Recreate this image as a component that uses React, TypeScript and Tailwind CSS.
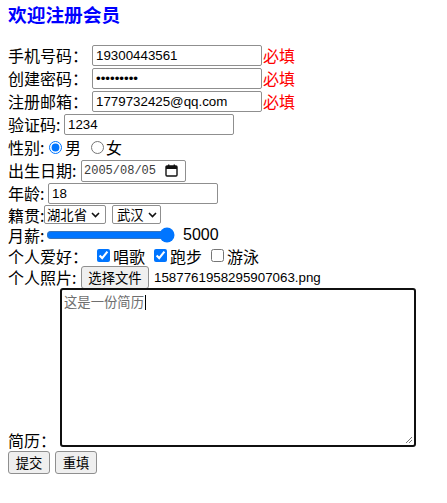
import React from 'react'

const inputCls =
  "h-[21px] shrink-0 border border-[#8f8f8f] rounded-[2px] px-[3px] text-[13.33px] font-['Liberation_Sans','Noto_Sans_CJK_SC',sans-serif] text-black outline-none bg-white"

const btnCls =
  "h-[23px] shrink-0 border border-[#8f8f8f] rounded-[3px] bg-[#efefef] px-[6px] text-[13.33px] text-black leading-none whitespace-nowrap"

const labelCls = 'shrink-0 whitespace-nowrap leading-[23px]'
const shortLabel = 'shrink-0 whitespace-nowrap leading-[20px]'

const Chevron = () => (
  <svg width="9" height="6" viewBox="0 0 9 6" className="ml-[4px] shrink-0">
    <path d="M1 1 L4.5 4.5 L8 1" fill="none" stroke="#111" strokeWidth="1.6" />
  </svg>
)

const Required = () => <span className={`${labelCls} ml-[1px] text-[#ff0000]`}>必填</span>

export default function App() {
  return (
    <div className="min-h-[503px] w-[447px] bg-white px-[8px] font-['Noto_Sans_CJK_SC',sans-serif] text-[16px] text-black">
      <h3 className="h-[27px] text-[18.72px] font-bold leading-[27px] text-[#0000ff]">欢迎注册会员</h3>

      <form className="mt-[17px] flex flex-col" onSubmit={(e) => e.preventDefault()}>
        <div className="flex h-[23px] items-center">
          <span className={`${labelCls} w-[84px]`}>手机号码：</span>
          <input className={`${inputCls} w-[170px]`} defaultValue="19300443561" />
          <Required />
        </div>
        <div className="flex h-[23px] items-center">
          <span className={`${labelCls} w-[84px]`}>创建密码：</span>
          <input type="password" className={`${inputCls} w-[170px]`} defaultValue="123456789" />
          <Required />
        </div>
        <div className="flex h-[23px] items-center">
          <span className={`${labelCls} w-[84px]`}>注册邮箱：</span>
          <input className={`${inputCls} w-[170px]`} defaultValue="1779732425@qq.com" />
          <Required />
        </div>
        <div className="flex h-[23px] items-center">
          <span className={`${labelCls} w-[56px]`}>验证码:</span>
          <input className={`${inputCls} w-[170px]`} defaultValue="1234" />
        </div>
        <div className="flex h-[23px] items-center">
          <span className={`${labelCls} w-[41px]`}>性别:</span>
          <input type="radio" name="sex" defaultChecked className="m-0 h-[13px] w-[13px] shrink-0 accent-[#0075ff]" />
          <span className="ml-[3px] w-[26px] shrink-0 leading-[23px]">男</span>
          <input type="radio" name="sex" className="m-0 h-[13px] w-[13px] shrink-0 accent-[#0075ff]" />
          <span className="ml-[2px] leading-[23px]">女</span>
        </div>
        <div className="flex h-[23px] items-center">
          <span className={`${labelCls} w-[73px]`}>出生日期:</span>
          <div className="flex h-[22px] w-[105px] shrink-0 items-center rounded-[2px] border border-[#8f8f8f] pl-[2px]">
            <span className="font-['Liberation_Mono',monospace] text-[12px] text-[#3b3b3b]">2005/08/05</span>
            <svg width="13" height="13" viewBox="0 0 13 13" className="ml-[9px]">
              <rect x="1" y="2" width="11" height="10" rx="1" fill="none" stroke="#111" strokeWidth="1.4" />
              <rect x="1" y="2" width="11" height="3" fill="#111" />
              <rect x="3" y="0.5" width="1.4" height="2.5" fill="#111" />
              <rect x="8.6" y="0.5" width="1.4" height="2.5" fill="#111" />
            </svg>
          </div>
        </div>
        <div className="flex h-[22px] items-center">
          <span className={`${shortLabel} w-[40px]`}>年龄:</span>
          <input className={`${inputCls} w-[170px]`} defaultValue="18" />
        </div>
        <div className="flex h-[21px] items-center">
          <span className={`${shortLabel} w-[36px]`}>籍贯:</span>
          <div className="flex h-[19px] w-[62px] shrink-0 items-center whitespace-nowrap rounded-[2px] border border-[#8f8f8f] pl-[2px] text-[13.33px] leading-[17px]">
            湖北省
            <Chevron />
          </div>
          <div className="ml-[6px] flex h-[19px] w-[49px] shrink-0 items-center whitespace-nowrap rounded-[2px] border border-[#8f8f8f] pl-[4px] text-[13.33px] leading-[17px]">
            武汉
            <Chevron />
          </div>
        </div>
        <div className="flex h-[20px] items-center">
          <span className={`${shortLabel} w-[38px]`}>月薪:</span>
          <input type="range" defaultValue={100} className="m-0 w-[129px] shrink-0 accent-[#0075ff]" />
          <span className="ml-[8px] font-['Liberation_Sans',sans-serif] leading-[20px]">5000</span>
        </div>
        <div className="flex h-[21px] items-center">
          <span className={`${shortLabel} w-[89px]`}>个人爱好：</span>
          <input type="checkbox" defaultChecked className="m-0 h-[13px] w-[13px] shrink-0 accent-[#0075ff]" />
          <span className="ml-[3px] w-[41px] shrink-0 leading-[20px]">唱歌</span>
          <input type="checkbox" defaultChecked className="m-0 h-[13px] w-[13px] shrink-0 accent-[#0075ff]" />
          <span className="ml-[3px] w-[41px] shrink-0 leading-[20px]">跑步</span>
          <input type="checkbox" className="m-0 h-[13px] w-[13px] shrink-0 accent-[#0075ff]" />
          <span className="ml-[3px] leading-[20px]">游泳</span>
        </div>
        <div className="flex h-[23px] items-center">
          <span className={`${labelCls} w-[73px]`}>个人照片:</span>
          <button type="button" className={`${btnCls} w-[68px]`}>选择文件</button>
          <span className="ml-[5px] whitespace-nowrap text-[13.33px] font-['Liberation_Sans',sans-serif]">1587761958295907063.png</span>
        </div>
        <div className="flex h-[162px] items-end">
          <span className={`${labelCls} mb-[-1px] w-[52px]`}>简历：</span>
          <div className="relative mb-[4px] h-[159px] w-[356px] shrink-0 rounded-[3px] border-2 border-[#101010] px-[2px] pt-[2px] leading-[16px]">
            <span className="text-[13.33px] text-[#6f6f6f]">这是一份简历</span>
            <span className="ml-[1px] inline-block h-[15px] w-[1px] bg-black align-[-3px]" />
            <svg width="9" height="9" viewBox="0 0 9 9" className="absolute bottom-[1px] right-[1px]">
              <path d="M8 2 L2 8 M8 5 L5 8" stroke="#777" strokeWidth="1" />
            </svg>
          </div>
        </div>
        <div className="flex items-center gap-[5px]">
          <button type="submit" className={`${btnCls} w-[42px]`}>提交</button>
          <button type="reset" className={`${btnCls} w-[42px]`}>重填</button>
        </div>
      </form>
    </div>
  )
}
